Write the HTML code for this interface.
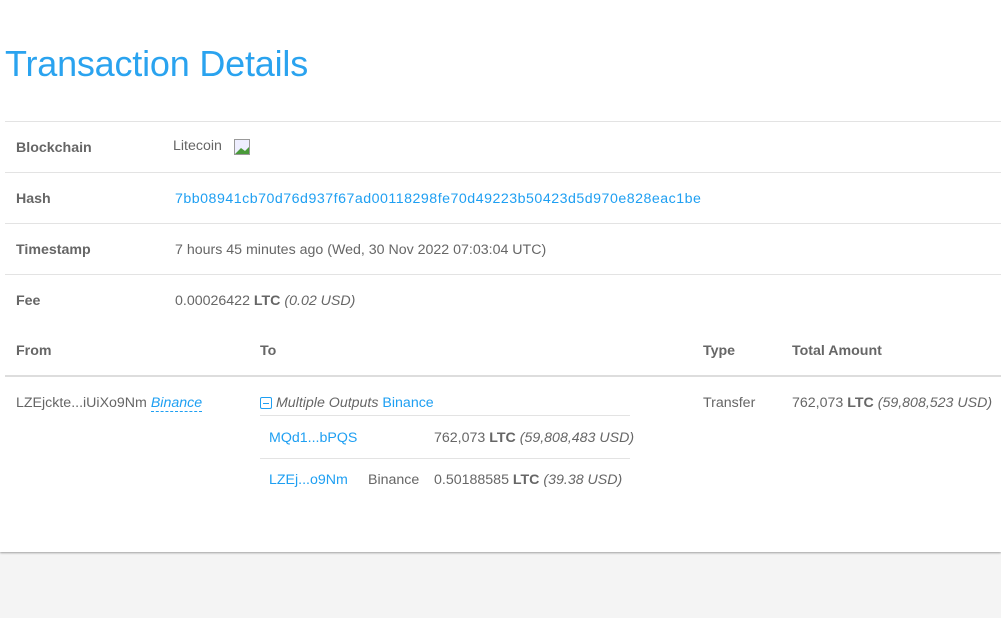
<!DOCTYPE html>
<html><head><meta charset="utf-8"><style>
body{margin:0;width:1001px;height:618px;background:#f4f4f4;font-family:"Liberation Sans",sans-serif;font-size:14.2px;color:#666;position:relative;overflow:hidden}
.w{position:absolute;left:0;top:0;width:1001px;height:552px;background:#fff;box-shadow:0 1px 2px rgba(0,0,0,.35)}
.a{position:absolute;white-space:nowrap;margin-top:1px}
.b{font-weight:bold;color:#666}
.l{color:#1e9ff2}
.h{position:absolute;left:5px;width:996px;height:1px;background:#e3e3e3}
i{font-style:italic}
</style></head><body><div class="w">
<div class="a" style="left:5px;top:42px;font-size:36px;color:#2aa3ef;letter-spacing:-0.2px">Transaction Details</div>
<div class="h" style="top:121px"></div>
<div class="a b" style="left:16px;top:139px">Blockchain</div>
<div class="a" style="left:173px;top:137px">Litecoin</div>
<svg class="a" style="left:234px;top:138px" width="16" height="16"><rect x="0.5" y="0.5" width="15" height="15" fill="#eef" stroke="#999"/><path d="M1 15 L7 9 L11 12 L15 8 L15 15Z" fill="#4a9a3a"/></svg>
<div class="h" style="top:172px"></div>
<div class="a b" style="left:16px;top:190px">Hash</div>
<div class="a l" style="left:175px;top:190px;letter-spacing:0.5px">7bb08941cb70d76d937f67ad00118298fe70d49223b50423d5d970e828eac1be</div>
<div class="h" style="top:223px"></div>
<div class="a b" style="left:16px;top:241px">Timestamp</div>
<div class="a" style="left:175px;top:241px">7 hours 45 minutes ago (Wed, 30 Nov 2022 07:03:04 UTC)</div>
<div class="h" style="top:274px"></div>
<div class="a b" style="left:16px;top:292px">Fee</div>
<div class="a" style="left:175px;top:292px">0.00026422 <span class="b">LTC</span> <i>(0.02 USD)</i></div>
<div class="a b" style="left:16px;top:342px">From</div>
<div class="a b" style="left:260px;top:342px">To</div>
<div class="a b" style="left:703px;top:342px">Type</div>
<div class="a b" style="left:792px;top:342px">Total Amount</div>
<div class="h" style="top:375px;height:2px;background:#ddd"></div>
<div class="a" style="left:16px;top:394px">LZEjckte...iUiXo9Nm <i class="l" style="border-bottom:1px dashed #1e9ff2">Binance</i></div>
<div class="a" style="left:260px;top:394px"><span style="display:inline-block;width:10px;height:10px;border:1px solid #1e9ff2;border-radius:2px;vertical-align:-2px;position:relative"><span style="position:absolute;left:2px;top:5px;width:6px;height:1px;background:#1e9ff2"></span></span> <i>Multiple Outputs</i> <span class="l">Binance</span></div>
<div class="h" style="left:260px;width:370px;top:415px"></div>
<div class="a l" style="left:269px;top:429px">MQd1...bPQS</div>
<div class="a" style="left:434px;top:429px">762,073 <span class="b">LTC</span> <i>(59,808,483 USD)</i></div>
<div class="h" style="left:260px;width:370px;top:458px"></div>
<div class="a l" style="left:269px;top:471px">LZEj...o9Nm</div>
<div class="a" style="left:368px;top:471px">Binance</div>
<div class="a" style="left:434px;top:471px">0.50188585 <span class="b">LTC</span> <i>(39.38 USD)</i></div>
<div class="a" style="left:703px;top:394px">Transfer</div>
<div class="a" style="left:792px;top:394px">762,073 <span class="b">LTC</span> <i>(59,808,523 USD)</i></div>
</div></body></html>
